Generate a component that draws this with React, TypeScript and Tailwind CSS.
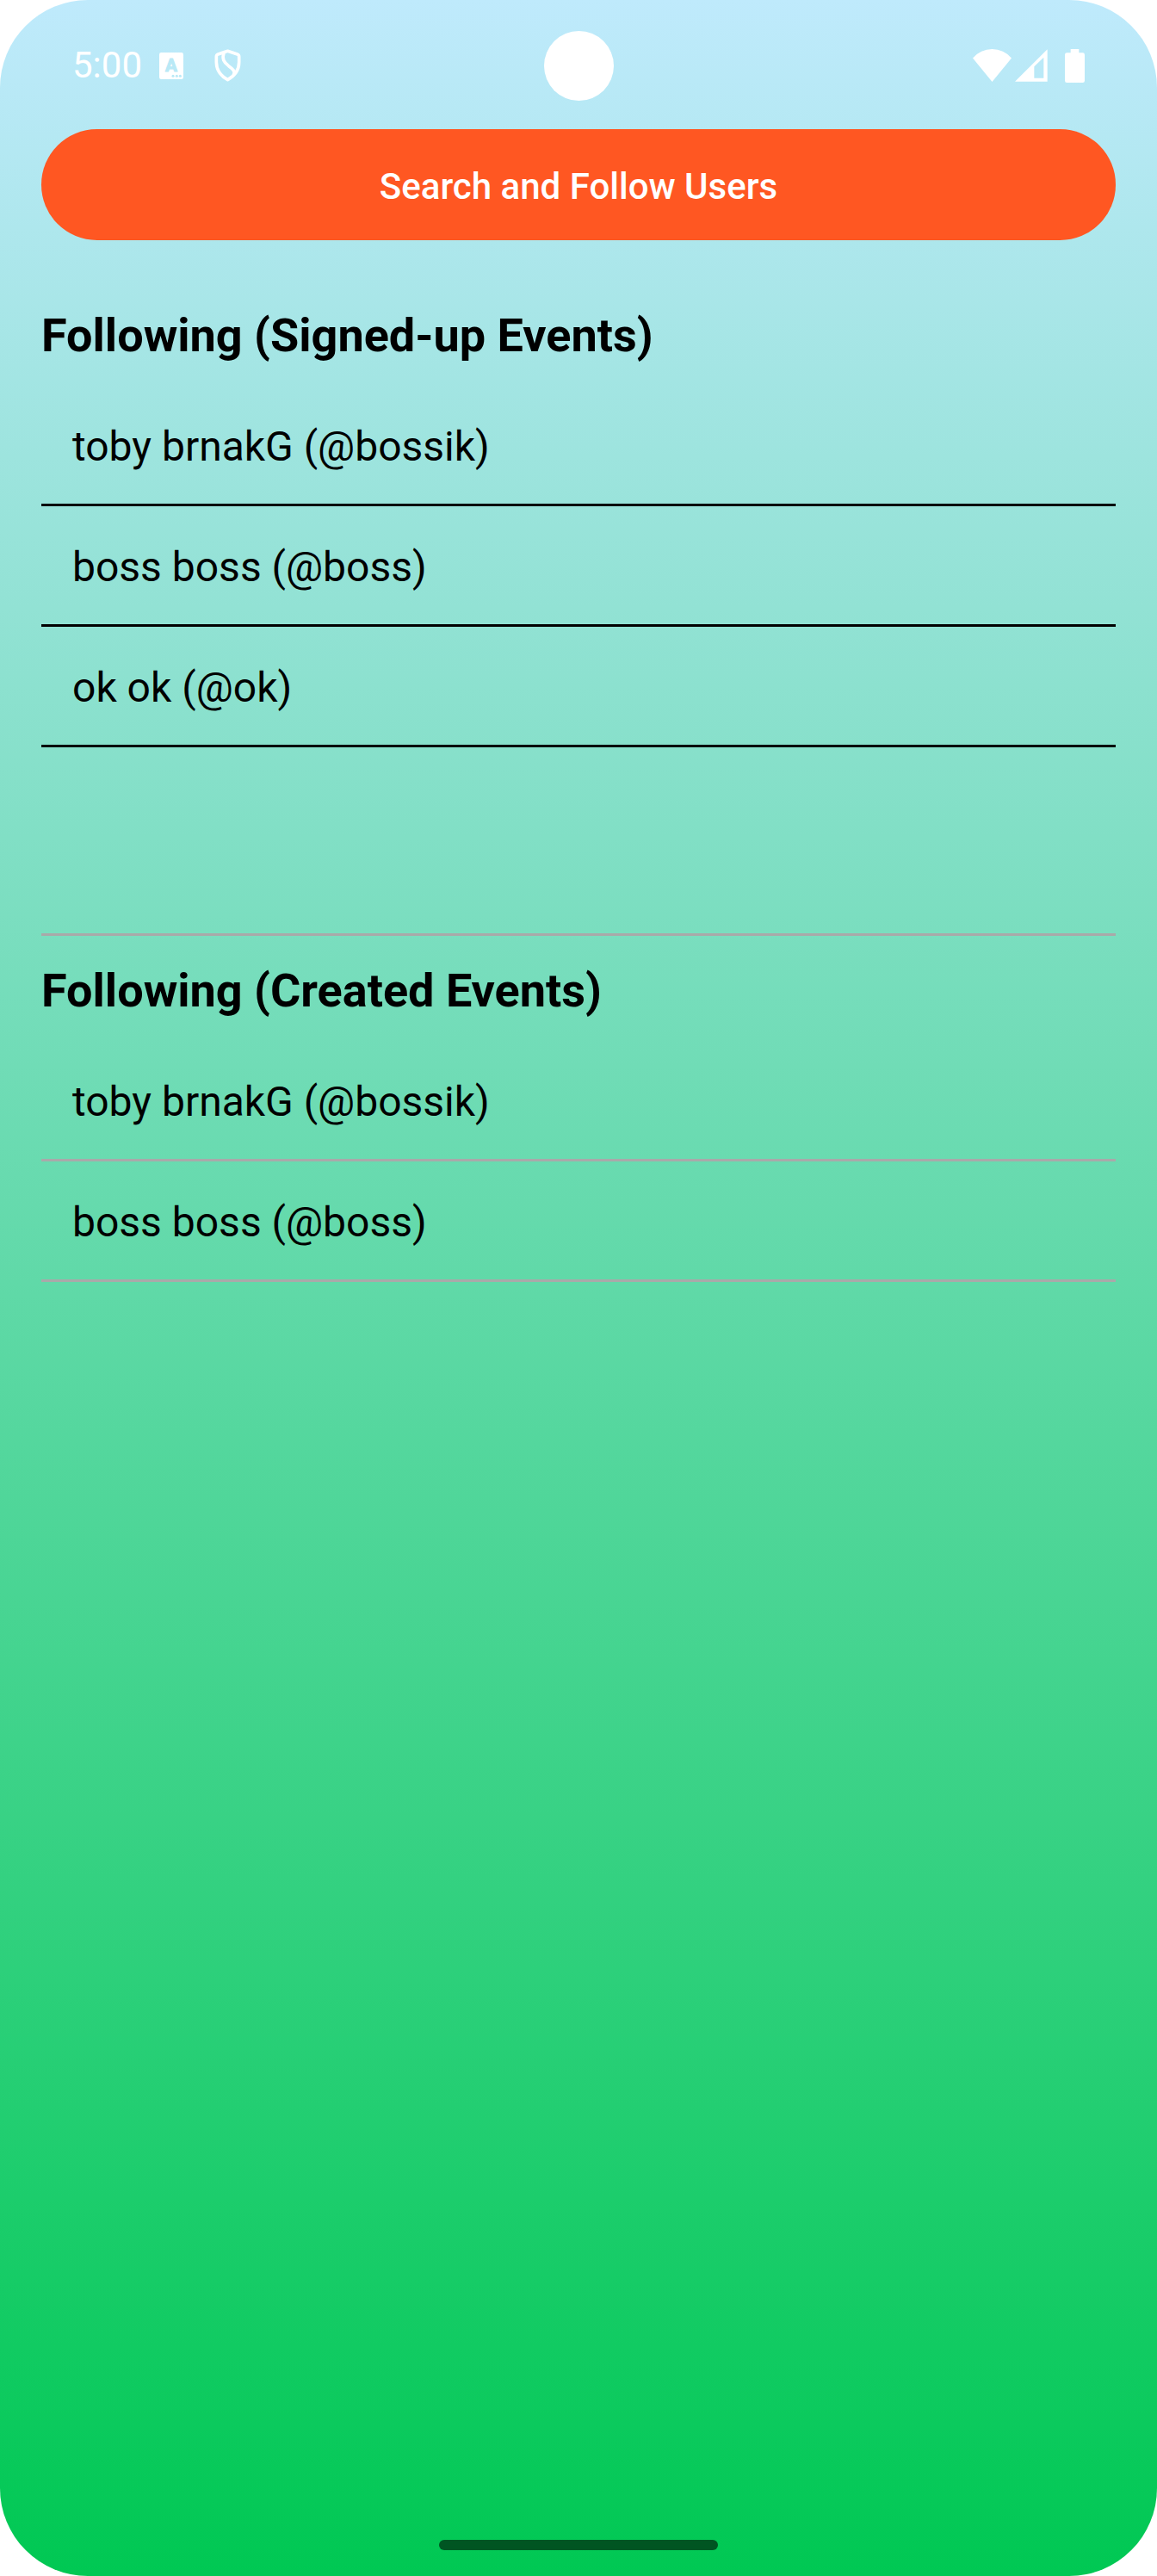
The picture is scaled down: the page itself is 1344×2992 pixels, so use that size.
type Person = { name: string; handle: string };

const signedUp: Person[] = [
  { name: "toby brnakG", handle: "bossik" },
  { name: "boss boss", handle: "boss" },
  { name: "ok ok", handle: "ok" },
];

const created: Person[] = [
  { name: "toby brnakG", handle: "bossik" },
  { name: "boss boss", handle: "boss" },
];

function KeyboardIcon() {
  return (
    <svg viewBox="0 0 84 93" className="h-[31px] w-7" aria-hidden="true">
      <rect width="84" height="93" rx="7" fill="#fff" />
      <text
        x="41.5"
        y="67"
        textAnchor="middle"
        fontFamily="Roboto, sans-serif"
        fontWeight="700"
        fontSize="62"
        fill="#b9e9f6"
        stroke="#b9e9f6"
        strokeWidth="3"
        strokeLinejoin="round"
      >
        A
      </text>
      <g fill="#b9e9f6">
        <circle cx="48" cy="82" r="4.5" />
        <circle cx="61" cy="82" r="4.5" />
        <circle cx="73" cy="82" r="4.5" />
      </g>
    </svg>
  );
}

function ShieldIcon() {
  return (
    <svg viewBox="0 0 93 114" className="h-[38px] w-[31px]" fill="none" stroke="#fff" strokeWidth="11" strokeLinejoin="round" aria-hidden="true">
      <path d="M46.5 7 L80 18 Q86 20 86 26 V46 C86 76 68 95 46.5 107 C25 95 7 76 7 46 V26 Q7 20 13 18 Z" />
      <path d="M33 13 C26 34 33 46 50 59 C66 70 75 80 66 92" />
    </svg>
  );
}

function WifiIcon() {
  return (
    <svg viewBox="0 0 134 113" className="h-[38px] w-[45px]" fill="#fff" aria-hidden="true">
      <path d="M67 113 L0 31 A88 88 0 0 1 134 31 Z" />
    </svg>
  );
}

function SignalIcon() {
  return (
    <svg viewBox="0 0 114 114" className="size-[38px]" fill="#fff" aria-hidden="true">
      <path fillRule="evenodd" d="M0 113 H113 V1 Z M67 101 V61 L100 29 V101 Z" />
    </svg>
  );
}

function BatteryIcon() {
  return (
    <svg viewBox="0 0 69 117" className="h-[39px] w-[23px]" fill="#fff" aria-hidden="true">
      <path d="M20 0 H49 V13 H62 Q69 13 69 20 V110 Q69 117 62 117 H7 Q0 117 0 110 V20 Q0 13 7 13 H20 Z" />
    </svg>
  );
}

function StatusBar() {
  return (
    <header className="grid h-[150px] grid-cols-[1fr_auto_1fr] items-center px-[84px] pt-0.5 text-white">
      <div className="flex items-center">
        <time className="text-[42px] leading-12">5:00</time>
        <div className="ml-5 flex items-center gap-9">
          <KeyboardIcon />
          <ShieldIcon />
        </div>
      </div>
      <div className="size-[81px] rounded-full bg-white" />
      <div className="flex items-center justify-end">
        <WifiIcon />
        <div className="ml-1 flex items-center gap-5">
          <SignalIcon />
          <BatteryIcon />
        </div>
      </div>
    </header>
  );
}

function PeopleList({ people, line }: { people: Person[]; line: string }) {
  return (
    <ul className="mt-[26px]">
      {people.map((p) => (
        <li key={p.handle} className={`border-b-3 px-9 pt-[42px] pb-[38px] text-[48px] leading-[57px] ${line}`}>
          {p.name} (@{p.handle})
        </li>
      ))}
    </ul>
  );
}

export default function App() {
  return (
    <div className="min-h-screen bg-white font-[Roboto,sans-serif] text-black">
      <div className="flex min-h-screen flex-col overflow-hidden rounded-[102px] bg-linear-to-b/srgb from-[#bfeafc] to-[#00c853]">
        <StatusBar />
        <main className="flex grow flex-col px-12">
          <button type="button" className="h-[129px] w-full rounded-full bg-[#ff5722] pt-1 text-[42px] font-medium text-white">
            Search and Follow Users
          </button>
          <section className="mt-[79px]">
            <h2 className="text-[54px] leading-16 font-bold">Following (Signed-up Events)</h2>
            <PeopleList people={signedUp} line="border-black" />
          </section>
          <section className="mt-[216px] border-t-3 border-[#a9a9a9] pt-8">
            <h2 className="text-[54px] leading-16 font-bold">Following (Created Events)</h2>
            <PeopleList people={created} line="border-[#a9a9a9]" />
          </section>
        </main>
        <footer className="flex justify-center pb-[30px]">
          <div className="h-3 w-[324px] rounded-full bg-[#005522]" />
        </footer>
      </div>
    </div>
  );
}
